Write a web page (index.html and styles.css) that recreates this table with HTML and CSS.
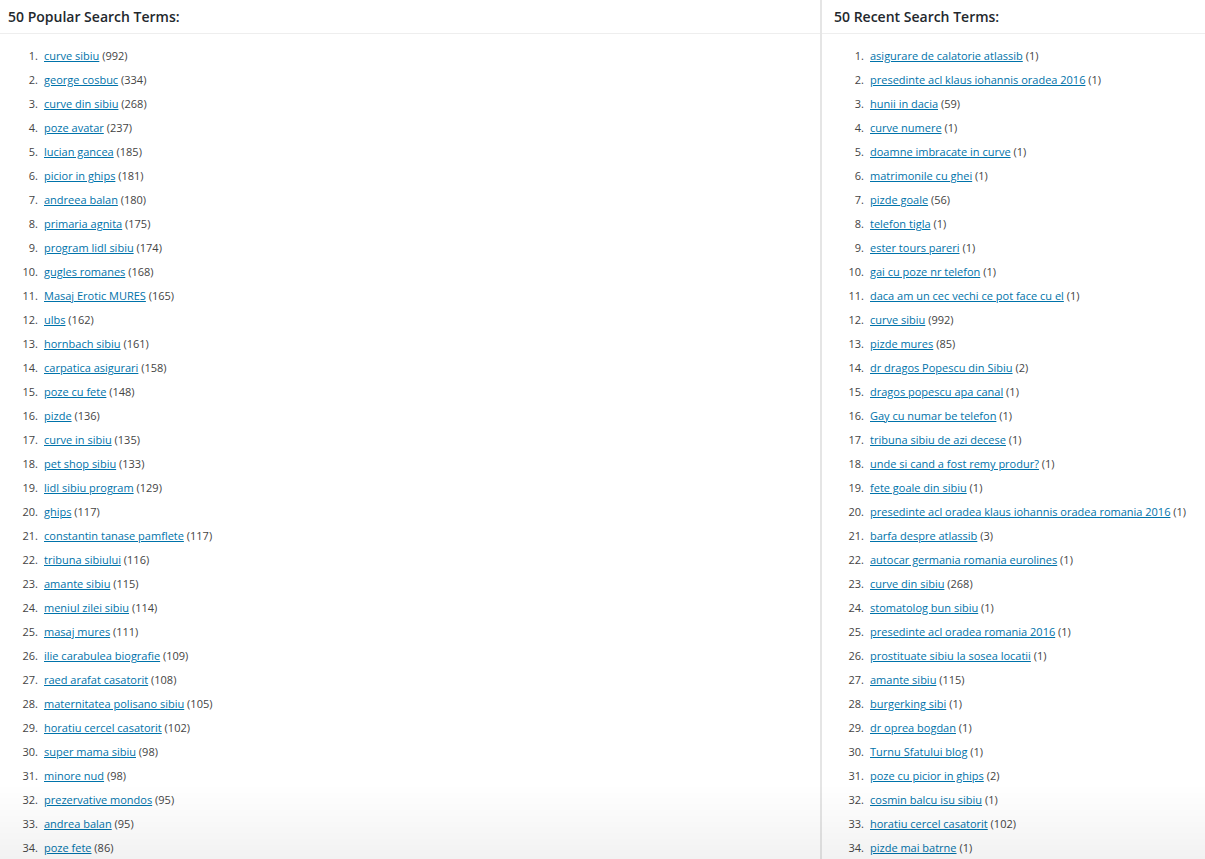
FILE: index.html
```html
<!DOCTYPE html>
<html lang="en">
<head>
    <meta charset="UTF-8">
    <title>Search Terms</title>
    <link rel="stylesheet" href="styles.css">
</head>
<body>
    <div class="terms">
        <div class="box popular">
            <h2>50 Popular Search Terms:</h2>
            <ol>
                <li><a href="#">curve sibiu</a> (992)</li>
                <li><a href="#">george cosbuc</a> (334)</li>
                <li><a href="#">curve din sibiu</a> (268)</li>
                <li><a href="#">poze avatar</a> (237)</li>
                <li><a href="#">lucian gancea</a> (185)</li>
                <li><a href="#">picior in ghips</a> (181)</li>
                <li><a href="#">andreea balan</a> (180)</li>
                <li><a href="#">primaria agnita</a> (175)</li>
                <li><a href="#">program lidl sibiu</a> (174)</li>
                <li><a href="#">gugles romanes</a> (168)</li>
                <li><a href="#">Masaj Erotic MURES</a> (165)</li>
                <li><a href="#">ulbs</a> (162)</li>
                <li><a href="#">hornbach sibiu</a> (161)</li>
                <li><a href="#">carpatica asigurari</a> (158)</li>
                <li><a href="#">poze cu fete</a> (148)</li>
                <li><a href="#">pizde</a> (136)</li>
                <li><a href="#">curve in sibiu</a> (135)</li>
                <li><a href="#">pet shop sibiu</a> (133)</li>
                <li><a href="#">lidl sibiu program</a> (129)</li>
                <li><a href="#">ghips</a> (117)</li>
                <li><a href="#">constantin tanase pamflete</a> (117)</li>
                <li><a href="#">tribuna sibiului</a> (116)</li>
                <li><a href="#">amante sibiu</a> (115)</li>
                <li><a href="#">meniul zilei sibiu</a> (114)</li>
                <li><a href="#">masaj mures</a> (111)</li>
                <li><a href="#">ilie carabulea biografie</a> (109)</li>
                <li><a href="#">raed arafat casatorit</a> (108)</li>
                <li><a href="#">maternitatea polisano sibiu</a> (105)</li>
                <li><a href="#">horatiu cercel casatorit</a> (102)</li>
                <li><a href="#">super mama sibiu</a> (98)</li>
                <li><a href="#">minore nud</a> (98)</li>
                <li><a href="#">prezervative mondos</a> (95)</li>
                <li><a href="#">andrea balan</a> (95)</li>
                <li><a href="#">poze fete</a> (86)</li>
            </ol>
        </div>
        <div class="box recent">
            <h2>50 Recent Search Terms:</h2>
            <ol>
                <li><a href="#">asigurare de calatorie atlassib</a> (1)</li>
                <li><a href="#">presedinte acl klaus iohannis oradea 2016</a> (1)</li>
                <li><a href="#">hunii in dacia</a> (59)</li>
                <li><a href="#">curve numere</a> (1)</li>
                <li><a href="#">doamne imbracate in curve</a> (1)</li>
                <li><a href="#">matrimonile cu ghei</a> (1)</li>
                <li><a href="#">pizde goale</a> (56)</li>
                <li><a href="#">telefon tigla</a> (1)</li>
                <li><a href="#">ester tours pareri</a> (1)</li>
                <li><a href="#">gai cu poze nr telefon</a> (1)</li>
                <li><a href="#">daca am un cec vechi ce pot face cu el</a> (1)</li>
                <li><a href="#">curve sibiu</a> (992)</li>
                <li><a href="#">pizde mures</a> (85)</li>
                <li><a href="#">dr dragos Popescu din Sibiu</a> (2)</li>
                <li><a href="#">dragos popescu apa canal</a> (1)</li>
                <li><a href="#">Gay cu numar be telefon</a> (1)</li>
                <li><a href="#">tribuna sibiu de azi decese</a> (1)</li>
                <li><a href="#">unde si cand a fost remy produr?</a> (1)</li>
                <li><a href="#">fete goale din sibiu</a> (1)</li>
                <li><a href="#">presedinte acl oradea klaus iohannis oradea romania 2016</a> (1)</li>
                <li><a href="#">barfa despre atlassib</a> (3)</li>
                <li><a href="#">autocar germania romania eurolines</a> (1)</li>
                <li><a href="#">curve din sibiu</a> (268)</li>
                <li><a href="#">stomatolog bun sibiu</a> (1)</li>
                <li><a href="#">presedinte acl oradea romania 2016</a> (1)</li>
                <li><a href="#">prostituate sibiu la sosea locatii</a> (1)</li>
                <li><a href="#">amante sibiu</a> (115)</li>
                <li><a href="#">burgerking sibi</a> (1)</li>
                <li><a href="#">dr oprea bogdan</a> (1)</li>
                <li><a href="#">Turnu Sfatului blog</a> (1)</li>
                <li><a href="#">poze cu picior in ghips</a> (2)</li>
                <li><a href="#">cosmin balcu isu sibiu</a> (1)</li>
                <li><a href="#">horatiu cercel casatorit</a> (102)</li>
                <li><a href="#">pizde mai batrne</a> (1)</li>
            </ol>
        </div>
    </div>
    <div class="fade"></div>
</body>
</html>
```
FILE: styles.css
```css
body {
    margin: 0;
    font-family: "Open Sans", "Liberation Sans", sans-serif;
    font-size: 11px;
    color: #444;
    background-color: #fff;
}
.terms {
    display: grid;
    grid-template-columns: 820px 1fr;
}
.recent {
    border-left: 2px solid #e5e5e5;
}
h2 {
    margin: 0;
    height: 33px;
    line-height: 33px;
    font-size: 14px;
    font-weight: 600;
    color: #23282d;
    border-bottom: 1px solid #eee;
}
.popular h2 {
    padding-left: 8px;
}
.recent h2 {
    padding-left: 12px;
}
ol {
    list-style: none;
    counter-reset: term;
    margin: 0;
    padding: 10px 0 0 0;
}
li {
    counter-increment: term;
    line-height: 24px;
    white-space: nowrap;
}
li::before {
    content: counter(term) ".";
    display: inline-block;
    text-align: right;
    width: 38px;
    margin-right: 6px;
    color: #444;
}
.recent li::before {
    width: 42px;
}
a {
    color: #0073aa;
    text-decoration: underline;
}
.fade {
    position: fixed;
    left: 0;
    right: 0;
    bottom: 0;
    height: 75px;
    background: linear-gradient(to bottom, rgba(0,0,0,0), rgba(0,0,0,0.05));
    pointer-events: none;
}
```
